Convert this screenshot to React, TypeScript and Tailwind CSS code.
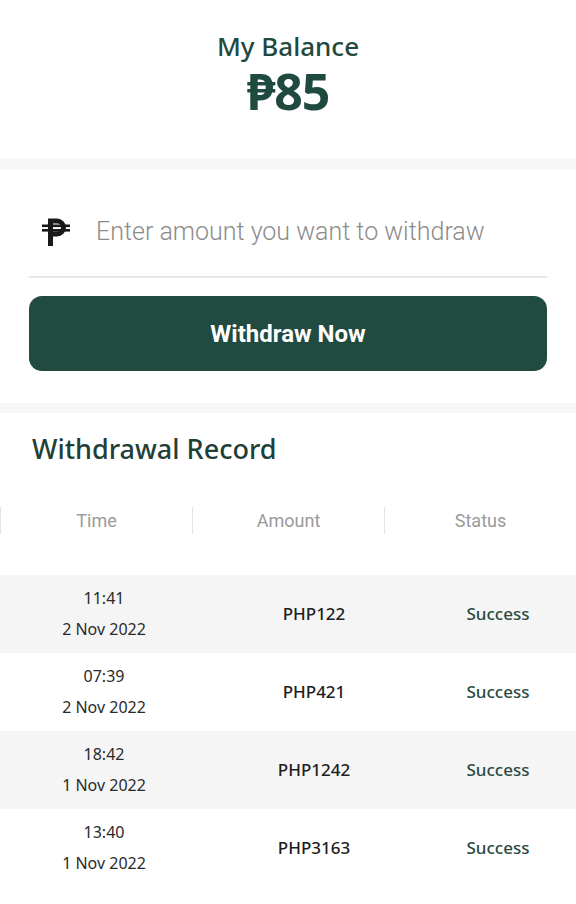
import React from 'react';

interface RecordRow {
  time: string;
  date: string;
  amount: string;
  status: string;
}

const records: RecordRow[] = [
  { time: '11:41', date: '2 Nov 2022', amount: 'PHP122', status: 'Success' },
  { time: '07:39', date: '2 Nov 2022', amount: 'PHP421', status: 'Success' },
  { time: '18:42', date: '1 Nov 2022', amount: 'PHP1242', status: 'Success' },
  { time: '13:40', date: '1 Nov 2022', amount: 'PHP3163', status: 'Success' },
];

const sans = "font-['Noto_Sans','Open_Sans',sans-serif]";
const roboto = "font-['Roboto','Liberation_Sans',sans-serif]";

const PesoIcon = () => (
  <svg width="28" height="28" viewBox="0 0 28 28" fill="none">
    <path d="M8.5 28V3H15a6.5 6.5 0 0 1 0 13H8.5" stroke="#1a1a1a" strokeWidth="5" />
    <rect x="0" y="6.5" width="28" height="2.6" fill="#1a1a1a" />
    <rect x="0" y="11" width="28" height="2.6" fill="#1a1a1a" />
  </svg>
);

export default function App() {
  return (
    <div className="w-[576px] min-h-[904px] bg-white">
      {/* Balance */}
      <div className="h-[158px] flex flex-col items-center pt-[28px]">
        <div className={`${sans} text-[26px] leading-[36px] font-medium text-[#1f4a40]`}>My Balance</div>
        <div className={`${sans} text-[50px] leading-[54px] font-bold text-[#1f4a40] tracking-tight`}>₱85</div>
      </div>

      <div className="h-[12px] bg-[#f7f7f7]" />

      {/* Withdraw form */}
      <div className="px-[29px] pt-[30px] pb-[32px]">
        <div className="flex items-start h-[78px] border-b-2 border-[#e8e8e8] pt-[14px]">
          <span className="w-[67px] pl-[13px] pt-[4px]">
            <PesoIcon />
          </span>
          <input
            className={`${roboto} flex-1 h-[36px] text-[25px] font-light text-[#333] placeholder:text-[#8c8c8c] outline-none bg-transparent`}
            placeholder="Enter amount you want to withdraw"
          />
        </div>
        <button className={`${roboto} mt-[18px] w-full h-[75px] rounded-[13px] bg-[#214a40] text-white text-[24px] font-bold`}>
          Withdraw Now
        </button>
      </div>

      <div className="h-[10px] bg-[#f7f7f7]" />

      {/* Records */}
      <div className="pt-[18px]">
        <h2 className={`${sans} px-[32px] text-[27px] leading-[36px] font-medium text-[#1f3f38]`}>Withdrawal Record</h2>
        <div className={`${roboto} mt-[40px] grid grid-cols-3 h-[26px] items-center text-[18px] text-[#9a9a9a]`}>
          <div className="text-center border-l border-[#e3e3e3]">Time</div>
          <div className="text-center border-l border-[#e3e3e3]">Amount</div>
          <div className="text-center border-l border-[#e3e3e3]">Status</div>
        </div>
        <div className="mt-[42px]">
          {records.map((r, i) => (
            <div
              key={i}
              className={`${sans} grid grid-cols-[208px_212px_156px] h-[78px] items-center ${i % 2 === 0 ? 'bg-[#f5f5f5]' : 'bg-white'}`}
            >
              <div className="text-center text-[16px] leading-[31px] text-[#2a2a2a]">
                <div>{r.time}</div>
                <div>{r.date}</div>
              </div>
              <div className="text-center text-[17px] font-medium text-[#1e1e1e]">{r.amount}</div>
              <div className="text-center text-[17px] font-medium text-[#2a4a42]">{r.status}</div>
            </div>
          ))}
        </div>
      </div>
    </div>
  );
}
